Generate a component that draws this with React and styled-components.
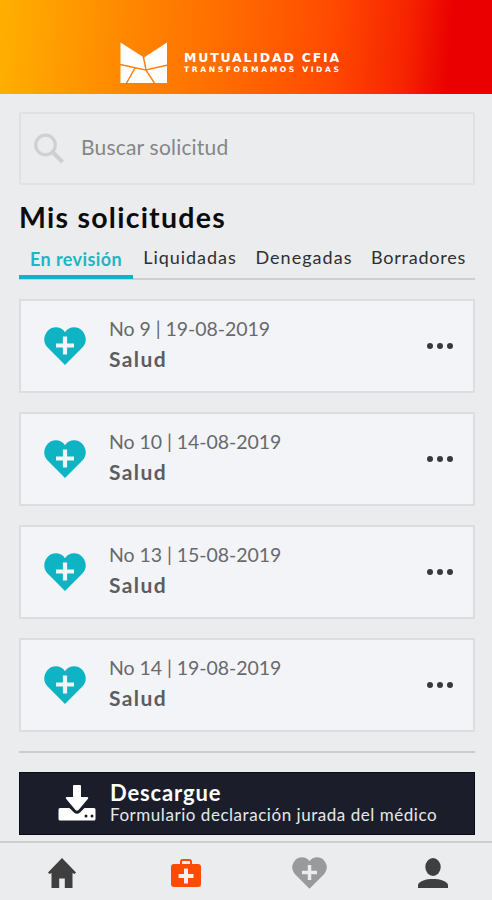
import styled, { createGlobalStyle } from "styled-components";

const GlobalStyle = createGlobalStyle`
* {
    box-sizing:border-box;
}
body {
    margin:0;
    background-color:#ebeced;
    font-family:Lato, "Open Sans", sans-serif;
}
button, input {
    font-family:inherit;
    border:none;
    padding:0;
    background:none;
}
`
const Screen = styled.div`
display:flex;
flex-direction:column;
width:100%;
height:900px;
overflow:hidden;
background-color:#ebeced;
`
const Header = styled.header`
display:flex;
flex:none;
height:94px;
padding:42px 0 0 120px;
color:white;
background:linear-gradient(94deg, #ffb000 0%, #ff8a00 24%, #ff6a00 47%, #ff4a00 67%, #f62400 82%, #ea0000 91%, #ea0000 100%);
`
const Brand = styled.div`
display:flex;
flex-direction:column;
margin-left:16px;
padding-top:9px;
font-family:"DejaVu Sans", sans-serif;
font-weight:700;
white-space:nowrap;
`
const BrandName = styled.span`
font-size:12.5px;
line-height:14px;
letter-spacing:1.8px;
`
const BrandTagline = styled.span`
font-size:7.6px;
line-height:10px;
letter-spacing:2.6px;
`
const Content = styled.main`
display:flex;
flex:none;
flex-direction:column;
height:747px;
padding:18px 17px 0 19px;
`
const SearchBox = styled.label`
display:flex;
flex:none;
align-items:center;
height:73px;
padding-left:13px;
border:2px solid #e0e1e2;
border-radius:2px;
input {
    flex:1;
    min-width:0;
    margin:0 0 4px 17px;
    color:#858687;
    font-size:21px;
    line-height:28px;
    letter-spacing:0.2px;
    outline:none;
}
input::placeholder {
    color:#858687;
    opacity:1;
}
`
const Title = styled.h1`
margin:14px 0 0;
color:#0b0c0e;
font-size:28.5px;
font-weight:700;
line-height:36px;
letter-spacing:1.25px;
white-space:nowrap;
`
const Tabs = styled.nav`
display:flex;
flex:none;
height:42px;
margin-top:3px;
border-bottom:2px solid #cdcecf;
`
const Tab = styled.button`
flex:none;
width:${p => p.$width}px;
height:${p => p.$active ? 41 : 38}px;
padding-top:${p => p.$active ? 4 : 0}px;
border-bottom:${p => p.$active ? "4px solid #0fb4c4" : "none"};
color:${p => p.$active ? "#1fb5c4" : "#2e2f31"};
font-size:18px;
font-weight:${p => p.$active ? 700 : 400};
letter-spacing:${p => p.$spacing}px;
white-space:nowrap;
`
const CardList = styled.div`
display:flex;
flex-direction:column;
gap:19px;
margin-top:19px;
`
const Card = styled.article`
display:flex;
align-items:center;
height:94px;
padding:0 20px 0 23px;
border:2px solid #dcdddf;
background-color:#f3f4f8;
`
const CardText = styled.div`
display:flex;
flex:1;
flex-direction:column;
margin:0 0 4px 23px;
color:#68696b;
font-size:19.5px;
line-height:30px;
letter-spacing:-0.05px;
strong {
    color:#5c5d5f;
    font-size:21px;
    letter-spacing:1.4px;
}
`
const MoreButton = styled.button`
display:flex;
gap:4px;
span {
    width:6px;
    height:6px;
    border-radius:50%;
    background-color:#38393c;
}
`
const Divider = styled.hr`
width:100%;
height:2px;
margin:19px 0 0;
border:none;
background-color:#cbcccd;
`
const DownloadButton = styled.button`
display:flex;
flex:none;
align-items:center;
height:63px;
margin-top:19px;
padding-left:38px;
border:1px solid #0b0d16;
color:white;
background-color:#1b1e2a;
text-align:left;
`
const DownloadText = styled.span`
display:flex;
flex-direction:column;
margin:0 0 2px 14px;
font-size:17px;
line-height:20px;
letter-spacing:0.54px;
white-space:nowrap;
color:#e6e7e9;
strong {
    color:white;
    font-size:22px;
    line-height:24px;
    letter-spacing:0.85px;
}
`
const BottomNav = styled.nav`
display:grid;
flex:none;
grid-template-columns:repeat(4, 123.8px);
height:59px;
border-top:2px solid #cdcecf;
button {
    display:flex;
    justify-content:center;
    align-items:center;
    padding-top:3px;
}
`

const Logo = () => (
    <svg width="48" height="42" viewBox="0 0 48 42">
        <path d="M0.5 0.5 L24 15.5 L47 0.5 V41 H0.5 Z" fill="#fff" />
        <path d="M23.2 14 L26 28 L48 23 M0 22.5 L26 28 L35 42 M15 26 L6 42" fill="none" stroke="#ff7b0a" strokeWidth="1.4" />
    </svg>
)

const SearchIcon = () => (
    <svg width="30" height="31" viewBox="0 0 30 31" fill="none" stroke="#cfd0d0">
        <circle cx="11.5" cy="12" r="9.8" strokeWidth="3.2" />
        <path d="M18.5 19 L28.5 29" strokeWidth="4" />
    </svg>
)

const HeartIcon = ({ size = 42, color = "#0fb4c4", cross = "#f3f4f8" }) => (
    <svg width={size} height={size * 38 / 42} viewBox="0 0 42 38">
        <path d="M21 5.2 C17.5 -0.6 8.5 -1.4 3.8 3.8 C-0.9 8.8 -0.9 16 3.6 20.6 L21 38 L38.4 20.6 C42.9 16 42.9 8.8 38.2 3.8 C33.5 -1.4 24.5 -0.6 21 5.2 Z" fill={color} />
        <path d="M21 9.5 V27.5 M12 18.5 H30" stroke={cross} strokeWidth="4.2" />
    </svg>
)

const DownloadIcon = () => (
    <svg width="38" height="38" viewBox="0 0 38 38" fill="#fff">
        <path d="M15 1 Q15 0 16 0 H22 Q23 0 23 1 V12 H29 Q31 12.4 29.8 14 L20.5 25 Q19 26.5 17.5 25 L8.2 14 Q7 12.4 9 12 H15 Z" />
        <path d="M0.5 24.5 Q0.5 23 2 23 H11.5 L16 27.5 Q19 30 22 27.5 L26.5 23 H36 Q37.5 23 37.5 24.5 V34 Q37.5 35.5 36 35.5 H2 Q0.5 35.5 0.5 34 Z" />
        <circle cx="28" cy="31" r="1.5" fill="#1b1e2a" />
        <circle cx="34" cy="31" r="1.5" fill="#1b1e2a" />
    </svg>
)

const HomeIcon = () => (
    <svg width="28" height="30" viewBox="0 0 28 30">
        <path d="M14 0 L28 14.5 L26.5 16 L24.5 15 V30 H16.8 V20.5 H11.2 V30 H3.5 V15 L1.5 16 L0 14.5 Z" fill="#3f3f3f" />
    </svg>
)

const MedkitIcon = () => (
    <svg width="30" height="28" viewBox="0 0 30 28">
        <path d="M10 6 V2.6 Q10 1 11.6 1 H18.4 Q20 1 20 2.6 V6" fill="none" stroke="#ff4b00" strokeWidth="2" />
        <rect y="5" width="30" height="23" rx="3" fill="#ff4b00" />
        <path d="M15 9.5 V24.5 M7.5 17 H22.5" stroke="#f6efed" strokeWidth="4" />
    </svg>
)

const UserIcon = () => (
    <svg width="30" height="30" viewBox="0 0 30 30" fill="#3f3f3f">
        <ellipse cx="15" cy="9" rx="7.7" ry="9" />
        <path d="M0 30 V26.5 C1.5 23 8 21 15 21 C22 21 28.5 23 30 26.5 V30 Z" />
    </svg>
)

const tabs = [
    { label: "En revisión", width: 114, spacing: 0.4, active: true },
    { label: "Liquidadas", width: 114, spacing: 0.95 },
    { label: "Denegadas", width: 114, spacing: 1.05 },
    { label: "Borradores", width: 115, spacing: 0.75 },
]

const solicitudes = [
    { id: 9, fecha: "19-08-2019", tipo: "Salud" },
    { id: 10, fecha: "14-08-2019", tipo: "Salud" },
    { id: 13, fecha: "15-08-2019", tipo: "Salud" },
    { id: 14, fecha: "19-08-2019", tipo: "Salud" },
]

export default function App() {
    return <>
    <GlobalStyle />
    <Screen>
        <Header>
            <Logo />
            <Brand>
                <BrandName>MUTUALIDAD CFIA</BrandName>
                <BrandTagline>TRANSFORMAMOS VIDAS</BrandTagline>
            </Brand>
        </Header>
        <Content>
            <SearchBox>
                <SearchIcon />
                <input placeholder="Buscar solicitud" />
            </SearchBox>
            <Title>Mis solicitudes</Title>
            <Tabs>
                {tabs.map(t => (
                    <Tab key={t.label} $width={t.width} $spacing={t.spacing} $active={t.active}>{t.label}</Tab>
                ))}
            </Tabs>
            <CardList>
                {solicitudes.map(s => (
                    <Card key={s.id}>
                        <HeartIcon />
                        <CardText>
                            <span>No {s.id} | {s.fecha}</span>
                            <strong>{s.tipo}</strong>
                        </CardText>
                        <MoreButton aria-label="Opciones"><span /><span /><span /></MoreButton>
                    </Card>
                ))}
            </CardList>
            <Divider />
            <DownloadButton>
                <DownloadIcon />
                <DownloadText>
                    <strong>Descargue</strong>
                    Formulario declaración jurada del médico
                </DownloadText>
            </DownloadButton>
        </Content>
        <BottomNav>
            <button aria-label="Inicio"><HomeIcon /></button>
            <button aria-label="Solicitudes"><MedkitIcon /></button>
            <button aria-label="Salud"><HeartIcon size={35} color="#999a9a" cross="#ebeced" /></button>
            <button aria-label="Perfil"><UserIcon /></button>
        </BottomNav>
    </Screen>
    </>
}
